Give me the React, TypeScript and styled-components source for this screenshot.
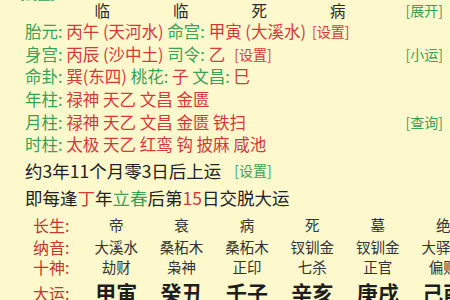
import React from "react";
import styled, { createGlobalStyle } from "styled-components";

const GREEN = "#3c9f56";
const RED = "#d13a3a";
const DARK = "#222222";

const Global = createGlobalStyle`
  html, body { margin: 0; padding: 0; background: #fdf9cd; }
  body { font-family: "Noto Sans CJK SC", "Noto Sans", sans-serif; }
`;

const Page = styled.div`
  width: 450px;
  height: 300px;
  overflow: hidden;
  background: #fdf9cd;
  color: ${DARK};
`;

const PillarRow = styled.div`
  display: flex;
  align-items: center;
  height: 20px;
  padding: 0 7px 0 20px;
  font-size: 15.5px;
  line-height: 16px;
`;

const PrevCell = styled.div`
  width: 43px;
  align-self: flex-start;
  overflow: visible;
`;

const Clipped = styled.span`
  display: block;
  margin-top: -15px;
  font-size: 13px;
  line-height: 17px;
  color: ${GREEN};
  white-space: nowrap;
`;

const PillarCell = styled.div`
  width: 78.5px;
  text-align: center;
  color: #2a2a2a;
`;

const Spacer = styled.div`
  flex: 1;
`;

const InfoRow = styled.div`
  display: flex;
  align-items: center;
  height: 22.6px;
  padding: 0 7px 0 25px;
  font-size: 16.5px;
  white-space: nowrap;
`;

const Tone = styled.span<{ $c: "g" | "r" | "d" }>`
  color: ${(p) => (p.$c === "g" ? GREEN : p.$c === "r" ? RED : DARK)};
`;

const Link = styled.span<{ $c: "g" | "r"; $gap?: number }>`
  font-size: 14px;
  margin-left: ${(p) => p.$gap ?? 6}px;
  color: ${(p) => (p.$c === "g" ? GREEN : RED)};
`;

const Sentence = styled.div<{ $h: number }>`
  display: flex;
  align-items: center;
  height: ${(p) => p.$h}px;
  padding-left: 25px;
  font-size: 17.5px;
  color: ${DARK};
  white-space: nowrap;
`;

const Table = styled.div`
  padding: 4px 0 0 33px;
  display: grid;
  grid-template-columns: 50.5px repeat(6, 65.4px);
`;

const Label = styled.div<{ $h: number }>`
  height: ${(p) => p.$h}px;
  display: flex;
  align-items: center;
  font-size: 16px;
  line-height: 1;
  color: #c0392e;
  white-space: nowrap;
`;

const Cell = styled.div<{ $h: number; $big?: boolean }>`
  height: ${(p) => p.$h}px;
  display: flex;
  align-items: center;
  justify-content: center;
  white-space: nowrap;
  font-size: ${(p) => (p.$big ? 21 : 14.5)}px;
  font-weight: ${(p) => (p.$big ? 700 : 400)};
  color: ${(p) => (p.$big ? "#1e1e1e" : "#333")};
  line-height: 1;
`;

const tableRows: { label: string; h: number; big?: boolean; vals: string[] }[] = [
  { label: "长生:", h: 23, vals: ["帝", "衰", "病", "死", "墓", "绝"] },
  { label: "纳音:", h: 21, vals: ["大溪水", "桑柘木", "桑柘木", "钗钏金", "钗钏金", "大驿土"] },
  { label: "十神:", h: 19, vals: ["劫财", "枭神", "正印", "七杀", "正官", "偏财"] },
  { label: "大运:", h: 32, big: true, vals: ["甲寅", "癸丑", "壬子", "辛亥", "庚戌", "己酉"] },
];

export default function App() {
  return (
    <Page>
      <Global />
      <PillarRow>
        <PrevCell>
          <Clipped>[调整]</Clipped>
        </PrevCell>
        {["临", "临", "死", "病"].map((t, i) => (
          <PillarCell key={i}>{t}</PillarCell>
        ))}
        <Spacer />
        <Link $c="g">[展开]</Link>
      </PillarRow>

      <InfoRow>
        <Tone $c="g">胎元:</Tone>&nbsp;<Tone $c="r">丙午 (天河水)</Tone>&nbsp;
        <Tone $c="g">命宫:</Tone>&nbsp;<Tone $c="r">甲寅 (大溪水)</Tone>
        <Link $c="r">[设置]</Link>
      </InfoRow>
      <InfoRow>
        <Tone $c="g">身宫:</Tone>&nbsp;<Tone $c="r">丙辰 (沙中土)</Tone>&nbsp;
        <Tone $c="g">司令:</Tone>&nbsp;<Tone $c="r">乙</Tone>
        <Link $c="r" $gap={9}>[设置]</Link>
        <Spacer />
        <Link $c="g">[小运]</Link>
      </InfoRow>
      <InfoRow>
        <Tone $c="g">命卦:</Tone>&nbsp;<Tone $c="r">巽(东四)</Tone>&nbsp;
        <Tone $c="g">桃花:</Tone>&nbsp;<Tone $c="r">子</Tone>&nbsp;
        <Tone $c="g">文昌:</Tone>&nbsp;<Tone $c="r">巳</Tone>
      </InfoRow>
      <InfoRow>
        <Tone $c="g">年柱:</Tone>&nbsp;<Tone $c="r">禄神 天乙 文昌 金匮</Tone>
      </InfoRow>
      <InfoRow>
        <Tone $c="g">月柱:</Tone>&nbsp;<Tone $c="r">禄神 天乙 文昌 金匮 铁扫</Tone>
        <Spacer />
        <Link $c="g">[查询]</Link>
      </InfoRow>
      <InfoRow>
        <Tone $c="g">时柱:</Tone>&nbsp;<Tone $c="r">太极 天乙 红鸾 钩 披麻 咸池</Tone>
      </InfoRow>

      <Sentence $h={29}>
        约3年11个月零3日后上运
        <Link $c="g" $gap={13}>[设置]</Link>
      </Sentence>
      <Sentence $h={25}>
        即每逢<Tone $c="r">丁</Tone>年<Tone $c="g">立春</Tone>后第<Tone $c="r">15</Tone>日交脱大运
      </Sentence>

      <Table>
        {tableRows.map((r) => (
          <React.Fragment key={r.label}>
            <Label $h={r.h}>{r.label}</Label>
            {r.vals.map((v, i) => (
              <Cell key={i} $h={r.h} $big={r.big}>
                {v}
              </Cell>
            ))}
          </React.Fragment>
        ))}
      </Table>
    </Page>
  );
}
